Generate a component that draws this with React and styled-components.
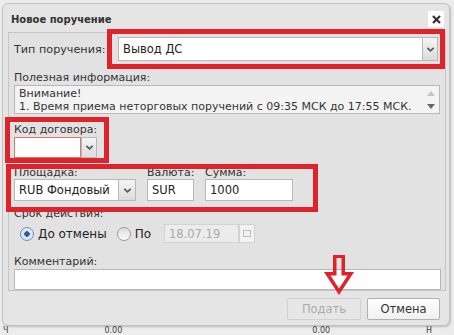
import React from 'react';
import styled, { createGlobalStyle } from 'styled-components';

const Global = createGlobalStyle`
  html, body { margin: 0; padding: 0; }
  body {
    background: #ececec;
    font-family: "DejaVu Sans", "Noto Sans", sans-serif;
    font-size: 11px;
    color: #222;
    overflow: hidden;
  }
`;

const Page = styled.div`
  width: 454px;
  height: 335px;
  position: relative;
  overflow: hidden;
`;

const Win = styled.div`
  position: relative;
  margin: 3px 0 0 2px;
  width: 446px;
  height: 321px;
  background: #e5e5e5;
  border: 1px solid #c2c2c2;
  border-radius: 6px;
  box-shadow: 1px 1px 2px rgba(0, 0, 0, 0.2);
  display: flex;
  flex-direction: column;
`;

const Header = styled.div`
  height: 28px;
  display: flex;
  align-items: center;
  justify-content: space-between;
  padding: 0 5px 0 8px;
`;

const Title = styled.div`
  font-weight: bold;
  font-size: 10px;
  color: #333;
  padding-top: 3px;
`;

const Close = styled.div`
  width: 16px;
  height: 16px;
  background: #fff;
  display: flex;
  align-items: center;
  justify-content: center;
  margin-top: 2px;
`;

const Panel = styled.div`
  margin: 0 3px 0 5px;
  height: 259px;
  border: 1px solid #c6c6c6;
  background: #e2e2e2;
  padding: 4px 5px 0 5px;
  box-sizing: border-box;
  display: flex;
  flex-direction: column;
`;

const Row = styled.div`
  display: flex;
  align-items: ${(p) => p.$align || 'center'};
  gap: ${(p) => p.$gap || 0}px;
`;

const Label = styled.div`
  color: #333;
  font-size: 11px;
  line-height: 13px;
  margin-top: ${(p) => p.$mt || 0}px;
  width: ${(p) => (p.$w ? p.$w + 'px' : 'auto')};
  white-space: nowrap;
`;

const Field = styled.div`
  display: flex;
  align-items: center;
  box-sizing: border-box;
  width: ${(p) => p.$w}px;
  height: ${(p) => p.$h || 22}px;
  background: ${(p) => (p.$disabled ? '#ececec' : '#fff')};
  border: 1px solid ${(p) => (p.$invalid ? '#d77a6e' : p.$disabled ? '#d2d2d2' : '#b8b8b8')};
  color: ${(p) => (p.$disabled ? '#aaa' : '#222')};
  padding-left: 4px;
  font-size: 11.5px;
  flex: none;
`;

const Combo = styled.div`
  display: flex;
  width: ${(p) => p.$w}px;
  height: ${(p) => p.$h || 22}px;
  flex: none;
`;

const ComboText = styled(Field)`
  flex: 1;
  width: auto;
  height: 100%;
  border-right: ${(p) => (p.$invalid ? '1px solid #d77a6e' : 'none')};
`;

const Trigger = styled.div`
  width: ${(p) => p.$w || 17}px;
  height: ${(p) => (p.$h ? p.$h + 'px' : '100%')};
  box-sizing: border-box;
  border: 1px solid ${(p) => (p.$disabled ? '#d2d2d2' : '#b8b8b8')};
  background: ${(p) => (p.$disabled ? '#f2f2f2' : 'linear-gradient(#f4f4f4, #dcdcdc)')};
  display: flex;
  align-items: center;
  justify-content: center;
  flex: none;
`;

const InfoBox = styled.div`
  margin-top: 1px;
  height: 29px;
  box-sizing: border-box;
  border: 1px solid #b8b8b8;
  background: #f3f3f3;
  display: flex;
`;

const InfoText = styled.div`
  flex: 1;
  padding: 1px 4px 0;
  font-size: 11px;
  line-height: 13px;
  color: #333;
  white-space: nowrap;
`;

const Scroll = styled.div`
  width: 16px;
  display: flex;
  flex-direction: column;
  align-items: center;
  justify-content: space-between;
  padding: 5px 0 4px;
`;

const Radio = styled.div`
  width: 12px;
  height: 12px;
  border-radius: 50%;
  border: 1px solid ${(p) => (p.$on ? '#6d8fb8' : '#9a9a9a')};
  background: ${(p) => (p.$on ? 'radial-gradient(circle, #2c5f9e 0 2.5px, #dbe7f4 3px)' : 'linear-gradient(#ddd, #fafafa)')};
  flex: none;
`;

const RadioLabel = styled.span`
  font-size: 12px;
  color: #222;
  margin-left: 4px;
  margin-right: ${(p) => p.$mr || 0}px;
`;

const Footer = styled.div`
  flex: 1;
  display: flex;
  justify-content: flex-end;
  align-items: flex-start;
  gap: 6px;
  padding: 7px 9px 0 0;
`;

const Btn = styled.div`
  width: ${(p) => p.$w}px;
  height: 22px;
  box-sizing: border-box;
  border: 1px solid ${(p) => (p.$disabled ? '#d0d0d0' : '#b0b0b0')};
  border-radius: 2px;
  background: ${(p) => (p.$disabled ? '#e7e7e7' : 'linear-gradient(#ffffff, #f0f0f0)')};
  color: ${(p) => (p.$disabled ? '#aaa' : '#333')};
  display: flex;
  align-items: center;
  justify-content: center;
  font-size: 11.5px;
`;

const Mark = styled.div`
  position: absolute;
  left: ${(p) => p.$x}px;
  top: ${(p) => p.$y}px;
  width: ${(p) => p.$w}px;
  height: ${(p) => p.$h}px;
  box-sizing: border-box;
  border: 5px solid #e0232b;
  pointer-events: none;
`;

const Arrow = styled.svg`
  position: absolute;
  left: 320px;
  top: 249px;
`;

const Behind = styled.div`
  position: absolute;
  left: 0;
  top: 326px;
  width: 454px;
  height: 9px;
  display: flex;
  font-size: 8px;
  line-height: 9px;
  color: #444;
  white-space: nowrap;
`;

const BehindCell = styled.span`
  margin-left: ${(p) => p.$ml}px;
`;

const Chevron = ({ size = 9 }) => (
  <svg width={size} height={size} viewBox="0 0 10 10">
    <path d="M1.5 3.2 L5 6.6 L8.5 3.2" fill="none" stroke="#555" strokeWidth="1.8" />
  </svg>
);

const Tri = ({ up, color }) => (
  <svg width="8" height="5" viewBox="0 0 8 5">
    <path d={up ? 'M0 5 L4 0 L8 5 Z' : 'M0 0 L4 5 L8 0 Z'} fill={color} />
  </svg>
);

export default function App() {
  return (
    <Page>
      <Global />
      <Behind>
        <BehindCell $ml={3}>Ч</BehindCell>
        <BehindCell $ml={96}>0.00</BehindCell>
        <BehindCell $ml={190}>0.00</BehindCell>
        <BehindCell $ml={96}>Н</BehindCell>
      </Behind>
      <Win>
        <Header>
          <Title>Новое поручение</Title>
          <Close>
            <svg width="9" height="9" viewBox="0 0 9 9">
              <path d="M1 1 L8 8 M8 1 L1 8" stroke="#333" strokeWidth="2.2" />
            </svg>
          </Close>
        </Header>
        <Panel>
          <Row>
            <Label $w={104} style={{ fontSize: 11.2 }}>Тип поручения:</Label>
            <Combo $w={320} $h={24}>
              <ComboText>Вывод ДС</ComboText>
              <Trigger $w={16}>
                <Chevron />
              </Trigger>
            </Combo>
          </Row>
          <Label $mt={10}>Полезная информация:</Label>
          <InfoBox>
            <InfoText>
              Внимание!
              <br />
              1. Время приема неторговых поручений с 09:35 МСК до 17:55 МСК.
            </InfoText>
            <Scroll>
              <Tri up color="#c4c4c4" />
              <Tri color="#666" />
            </Scroll>
          </InfoBox>
          <Label $mt={9}>Код договора:</Label>
          <Row style={{ marginTop: 1 }}>
            <Combo $w={83} $h={21}>
              <ComboText $invalid />
              <Trigger $w={16}>
                <Chevron />
              </Trigger>
            </Combo>
          </Row>
          <Row $gap={11} style={{ marginTop: 8 }}>
            <Label $w={122}>Площадка:</Label>
            <Label $w={47}>Валюта:</Label>
            <Label>Сумма:</Label>
          </Row>
          <Row $gap={11}>
            <Combo $w={122} $h={22}>
              <ComboText>RUB Фондовый</ComboText>
              <Trigger $w={18}>
                <Chevron />
              </Trigger>
            </Combo>
            <Field $w={47}>SUR</Field>
            <Field $w={88}>1000</Field>
          </Row>
          <Label $mt={6}>Срок действия:</Label>
          <Row style={{ marginTop: 4, paddingLeft: 6 }}>
            <Radio $on />
            <RadioLabel $mr={10}>До отмены</RadioLabel>
            <Radio />
            <RadioLabel $mr={13}>По</RadioLabel>
            <Field $w={75} $h={19} $disabled>18.07.19</Field>
            <Trigger $w={16} $h={19} $disabled>
              <svg width="8" height="7" viewBox="0 0 8 7">
                <rect x="0.5" y="0.5" width="7" height="6" fill="none" stroke="#bbb" />
              </svg>
            </Trigger>
          </Row>
          <Label $mt={12}>Комментарий:</Label>
          <Field $w={427} $h={21} style={{ marginTop: 1 }} />
        </Panel>
        <Footer>
          <Btn $w={74} $disabled>Подать</Btn>
          <Btn $w={73}>Отмена</Btn>
        </Footer>
        <Mark $x={104} $y={25} $w={338} $h={40} />
        <Mark $x={2} $y={113} $w={104} $h={46} />
        <Mark $x={3} $y={160} $w={312} $h={48} />
        <Arrow width="34" height="46" viewBox="0 0 34 46">
          <path
            d="M10 2 H22 V19 H31 L16 42 L1 19 H10 Z M13.5 5 V22.5 H7.5 L16 35.5 L24.5 22.5 H18.5 V5 Z"
            fill="#e0232b"
            fillRule="evenodd"
          />
        </Arrow>
      </Win>
    </Page>
  );
}
